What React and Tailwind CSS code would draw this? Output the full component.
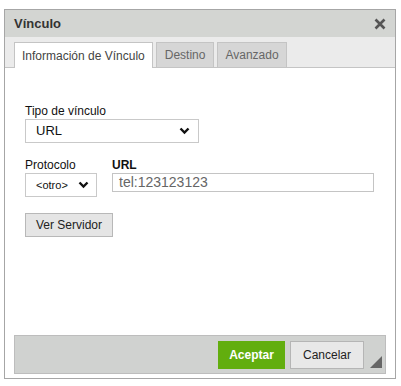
import React from "react";

const Chevron = () => (
  <svg width="11" height="8" viewBox="0 0 11 8" className="shrink-0">
    <path d="M1.5 1.5 L5.5 5.5 L9.5 1.5" fill="none" stroke="#111" strokeWidth="2.4" />
  </svg>
);

const App = () => {
  return (
    <div className="w-[401px] h-[386px] bg-white pt-[9px] pl-[4px] font-['Liberation_Sans',Arial,sans-serif] text-[12px] text-[#222]">
      <div className="w-[392px] h-[370px] border border-[#a6a6a6] flex flex-col bg-white">
        {/* title */}
        <div className="h-[27px] bg-[#d3d5d2] flex items-center justify-between pl-[9px] pr-[9px]">
          <span className="font-bold text-[13px] text-[#333]">Vínculo</span>
          <svg width="12" height="12" viewBox="0 0 12 12">
            <path d="M1.5 1.5 L10.5 10.5 M10.5 1.5 L1.5 10.5" stroke="#555" strokeWidth="2.6" />
          </svg>
        </div>

        {/* tabs */}
        <div className="h-[31px] bg-[#ebebeb] flex items-end pl-[9px] border-b border-[#c4c4c4] gap-[3px]">
          <div className="h-[26px] -mb-px bg-white border border-b-0 border-[#c4c4c4] px-[7px] flex items-center text-[#444]">
            Información de Vínculo
          </div>
          <div className="h-[25px] bg-[#d6d6d6] border border-b-0 border-[#c4c4c4] px-[8px] flex items-center text-[#666]">
            Destino
          </div>
          <div className="h-[25px] bg-[#d6d6d6] border border-b-0 border-[#c4c4c4] px-[7px] flex items-center text-[#666]">
            Avanzado
          </div>
        </div>

        {/* content */}
        <div className="flex-1 pl-[20px] pt-[35px]">
          <div className="leading-[16px] text-[#111]">Tipo de vínculo</div>
          <div className="w-[174px] h-[24px] border border-[#c9c9c9] flex items-center justify-between pl-[10px] pr-[8px] text-[13px] text-[#111]">
            <span>URL</span>
            <Chevron />
          </div>

          <div className="flex mt-[14px]">
            <div className="w-[87px]">
              <div className="leading-[16px] text-[#111]">Protocolo</div>
              <div className="w-[72px] h-[24px] border border-[#c9c9c9] flex items-center justify-between pl-[10px] pr-[7px] text-[11px] text-[#111]">
                <span>&lt;otro&gt;</span>
                <Chevron />
              </div>
            </div>
            <div>
              <div className="leading-[16px] font-bold text-[#111]">URL</div>
              <div className="w-[262px] h-[19px] border border-[#c4c4c4] flex items-center pl-[6px] text-[14px] text-[#666]">
                tel:123123123
              </div>
            </div>
          </div>

          <div className="mt-[16px] w-[88px] h-[24px] bg-[#e5e5e5] border border-[#b8b8b8] flex items-center justify-center text-[#222]">
            Ver Servidor
          </div>
        </div>

        {/* footer */}
        <div className="mx-[9px] mb-[4px] h-[39px] bg-[#d0d2d0] border border-[#bdbdbd] flex items-center justify-end pr-[3px]">
          <div className="w-[67px] h-[28px] bg-[#62ae0e] flex items-center justify-center font-bold text-white">
            Aceptar
          </div>
          <div className="ml-[5px] w-[74px] h-[28px] bg-[#e8e8e8] border border-[#b5b5b5] flex items-center justify-center text-[#222]">
            Cancelar
          </div>
          <svg width="12" height="12" viewBox="0 0 12 12" className="ml-[6px] mt-[14px]">
            <path d="M12 0 L12 12 L0 12 Z" fill="#666" />
          </svg>
        </div>
      </div>
    </div>
  );
};

export default App;
